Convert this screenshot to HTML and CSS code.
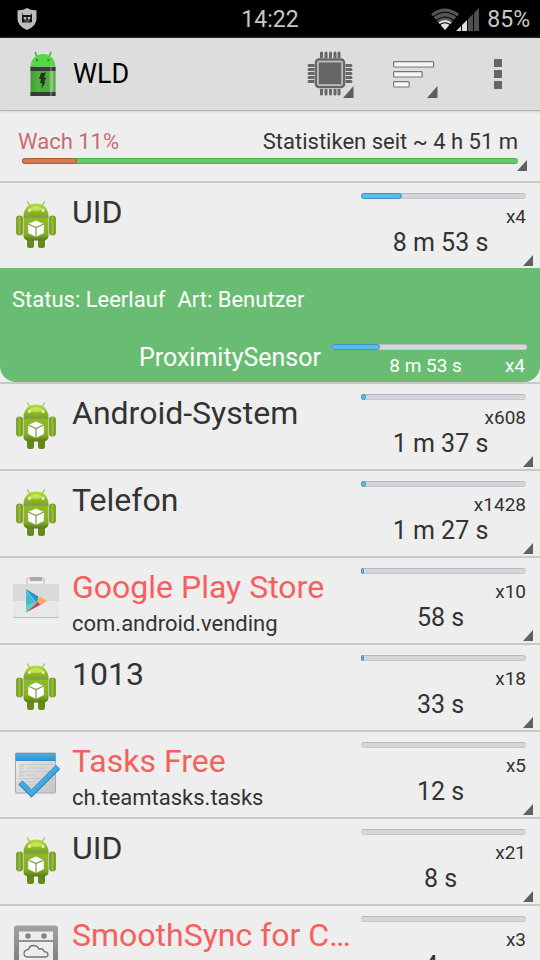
FILE: index.html
```html
<!DOCTYPE html>
<html lang="de">
<head>
<meta charset="utf-8">
<meta name="viewport" content="width=device-width, initial-scale=1">
<title>WLD</title>
<link rel="stylesheet" href="styles.css">
</head>
<body>
<svg class="defs" aria-hidden="true">
  <defs>
    <linearGradient id="green" x1="0" y1="0" x2="0" y2="1"><stop offset="0" stop-color="#b4dc3c"/><stop offset="1" stop-color="#7aa51e"/></linearGradient>
    <linearGradient id="limb" x1="0" y1="0" x2="1" y2="0"><stop offset="0" stop-color="#6d9622"/><stop offset=".5" stop-color="#96c02c"/><stop offset="1" stop-color="#68901f"/></linearGradient>
    <linearGradient id="torso" x1="0" y1="0" x2="0" y2="1"><stop offset="0" stop-color="#8fba27"/><stop offset=".7" stop-color="#87b024"/><stop offset="1" stop-color="#587b16"/></linearGradient>
    <linearGradient id="battery" x1="0" y1="0" x2="1" y2="0"><stop offset="0" stop-color="#3f9c33"/><stop offset=".3" stop-color="#4fb53f"/><stop offset=".74" stop-color="#46ab39"/><stop offset=".83" stop-color="#8be07a"/><stop offset="1" stop-color="#3f9c33"/></linearGradient>
    <linearGradient id="paper" x1="0" y1="0" x2="1" y2="1"><stop offset="0" stop-color="#ececec"/><stop offset="1" stop-color="#c6c6c6"/></linearGradient>
    <linearGradient id="blue" x1="0" y1="0" x2="0" y2="1"><stop offset="0" stop-color="#4bb4e8"/><stop offset="1" stop-color="#2d8fcb"/></linearGradient>
    <linearGradient id="steel" x1="0" y1="0" x2="0" y2="1"><stop offset="0" stop-color="#a2a2a2"/><stop offset="1" stop-color="#747474"/></linearGradient>
    <symbol id="robot" viewBox="0 0 48 48">
      <path d="M15.500 1 18 5M32.500 1 30 5" stroke="#9aba50" stroke-width="1.200" stroke-linecap="round"/>
      <rect x="4.500" y="15" width="6" height="19" rx="2" fill="url(#limb)" stroke="#648b1c" stroke-width=".6"/>
      <rect x="37.500" y="15" width="6" height="19" rx="2" fill="url(#limb)" stroke="#648b1c" stroke-width=".6"/>
      <path d="M15 37h7v7.500q0 2.500-2.500 2.500h-2Q15 47 15 44.500zM26 37h7v7.500q0 2.500-2.500 2.500h-2Q26 47 26 44.500z" fill="#638a1b"/>
      <path d="M11.500 16.500h25v18q0 4.500-5 5h-15q-5-.5-5-5z" fill="url(#torso)"/>
      <path d="M11.500 15.500C11.500 7 17 2.500 24 2.500s12.500 4.500 12.500 13z" fill="url(#green)"/>
      <path d="M16 8q8-6 16 0-8 4-16 0z" fill="#d3f26c" opacity=".65"/>
      <path d="M11.500 16h25" stroke="#4d6e12" stroke-width="1"/>
      <circle cx="17.500" cy="9.500" r="1.300" fill="#fff"/><circle cx="31" cy="9.500" r="1.300" fill="#fff"/>
      <path d="m24 19.500 7.800 3.500v9L24 36l-7.800-4v-9z" fill="#fff"/>
      <path d="m16.200 23 7.800 3.500 7.800-3.500M24 26.500v9.500" fill="none" stroke="#7b9c48" stroke-width="1.200"/>
    </symbol>
  </defs>
</svg>
<div class="app">
  <div class="status">
    <svg class="shield" viewBox="0 0 20 22" aria-hidden="true"><path d="M10 0q4 2.500 9.500 2.200V11q0 7-9.500 11Q.5 18 .5 11V2.200Q6 2.500 10 0z" fill="#bdbdbd"/><path d="M5.500 4.500 6.300 7h7.400l.8-2.500.5 4v5q0 1-1 1H6q-1 0-1-1v-5z" fill="#111"/><path d="M6.500 9h2.800v2.500H7zM10.700 9h2.800L13 11.500h-2.300z" fill="#bdbdbd"/><path d="M7.500 13h5" stroke="#aaa" stroke-width=".8"/></svg>
    <span class="clock">14:22</span>
    <span class="signals">
      <svg class="wifi" viewBox="0 0 28 22" aria-hidden="true"><path d="M0 6Q14-5 28 6L14 22z" fill="#555"/><path d="M7.500 14.500Q14 9.500 20.500 14.500L14 22z" fill="#e2e2e2"/><path d="M2 9Q14-.5 26 9M5 12.500q9-7 18 0M9 16.500q5-3.500 10 0" fill="none" stroke="#000" stroke-width="1.200"/></svg>
      <svg class="cell" viewBox="0 0 23 23" aria-hidden="true"><path d="M0 23 5 18v5zM6 17l5-5v11H6z" fill="#dedede"/><path d="m12 11 5-5v17h-5zM18 5l5-5v23h-5z" fill="#505050"/></svg>
      <span>85%</span>
    </span>
  </div>

  <header class="bar">
    <svg class="logo" viewBox="0 0 28 46" aria-hidden="true"><path d="m6 1 2 5M22 1l-2 5" stroke="#45a43a" stroke-width="1.600"/><path d="M1.500 15.500C2 7 8 3 14 3s12 4 12.500 12.500z" fill="#55d748"/><circle cx="8" cy="9" r="1.200" fill="#328f2b"/><circle cx="19.500" cy="9" r="1.200" fill="#328f2b"/><rect x="1.500" y="15.500" width="25" height="29" fill="url(#battery)"/><path d="M1.500 16h25v4h-25zM1.500 41h25v4h-25z" fill="#3a3a3a"/><path d="M22 16v29" stroke="#aaa" stroke-width="2" opacity=".4"/><path d="m12 22 5-.5-2 5h2.500L15 31h1.500l-4 7 .5-6h-2l1-4h-2z" fill="#2b2f27"/></svg>
    <h1 class="app-name">WLD</h1>
    <button class="tool" type="button" aria-label="CPU">
      <svg class="tool-icon" viewBox="0 0 48 48" aria-hidden="true"><g stroke="#666" stroke-width="3" stroke-linecap="round"><path d="M15.500 3v41M20 3v41M24.500 3v41M29 3v41M33 3v41M3 15.500h42M3 19.500h42M3 23.500h42M3 27.500h42M3 31.500h42"/></g><rect x="8.500" y="8" width="31" height="31" fill="#ddd"/><rect x="10" y="9.500" width="28" height="27.500" rx="3" fill="#ddd" stroke="#666" stroke-width="2.500"/><rect x="12.500" y="12" width="23" height="22.500" fill="#666" stroke="#aaa" stroke-width="1"/><path d="M47.500 35v13h-12z" fill="#ddd"/><path d="M47.500 36v12H37z" fill="#5c5c5c"/></svg>
    </button>
    <button class="tool" type="button" aria-label="Sortieren">
      <svg class="tool-icon" viewBox="0 0 48 48" aria-hidden="true"><g fill="#f7f7f7" stroke="#777" stroke-width="1.200"><rect x="3.600" y="11.600" width="40" height="5.400" rx=".8"/><rect x="3.600" y="21.600" width="28.500" height="5.400" rx=".8"/><rect x="3.600" y="31.600" width="15.500" height="5.400" rx=".8"/></g><path d="M47.500 36v12H37z" fill="#5c5c5c"/></svg>
    </button>
    <button class="tool" type="button" aria-label="Menü">
      <svg class="tool-icon" viewBox="0 0 48 48" aria-hidden="true"><path d="M20 9h8v8h-8zM20 20h8v8h-8zM20 31h8v8h-8z" fill="#666"/></svg>
    </button>
  </header>

  <section class="summary corner">
    <div class="summary-text"><span class="awake">Wach 11%</span><span>Statistiken seit ~ 4 h 51 m</span></div>
    <div class="meter total"><div class="fill" style="width:11%"></div></div>
  </section>

  <main>
    <ul class="list">
      <li class="item">
        <div class="row corner">
          <svg class="icon" aria-hidden="true"><use href="#robot"/></svg>
          <div class="info"><h2 class="name">UID</h2></div>
          <div class="stats"><div class="meter"><div class="fill" style="width:25%"></div></div><p class="count">x4</p><p class="time">8 m 53 s</p></div>
        </div>
        <div class="detail">
          <p class="state"><span>Status: Leerlauf</span><span>Art: Benutzer</span></p>
          <div class="lock">
            <p class="lock-name">ProximitySensor</p>
            <div class="lock-stats"><div class="meter"><div class="fill" style="width:25%"></div></div><p class="lock-figures"><span class="lock-time">8 m 53 s</span><span>x4</span></p></div>
          </div>
        </div>
      </li>
      <li class="item">
        <div class="row corner">
          <svg class="icon" aria-hidden="true"><use href="#robot"/></svg>
          <div class="info"><h2 class="name">Android-System</h2></div>
          <div class="stats"><div class="meter"><div class="fill" style="width:3%"></div></div><p class="count">x608</p><p class="time">1 m 37 s</p></div>
        </div>
      </li>
      <li class="item">
        <div class="row corner">
          <svg class="icon" aria-hidden="true"><use href="#robot"/></svg>
          <div class="info"><h2 class="name">Telefon</h2></div>
          <div class="stats"><div class="meter"><div class="fill" style="width:3%"></div></div><p class="count">x1428</p><p class="time">1 m 27 s</p></div>
        </div>
      </li>
      <li class="item">
        <div class="row corner">
          <svg class="icon" viewBox="0 0 48 48" aria-hidden="true"><path d="M15 12V4q0-2 2-2h13q2 0 2 2v6" fill="none" stroke="#d2d2d2" stroke-width="2"/><path d="M18 1h12v4H18z" fill="#aaa"/><rect x="1" y="8" width="46" height="34" rx="2" fill="#bdbdbd"/><rect x="1" y="8" width="46" height="33" rx="2" fill="#e8e8e8"/><path d="M1 25V10q0-2 2-2h42q2 0 2 2v15z" fill="#dadada"/><path d="M14 13v23.500L26 25z" fill="#4fd9c8"/><path d="m14 13 12.500 7.500L25 27z" fill="#2d8fc4"/><path d="m14 15 9 11-9 3z" fill="#45b8d8"/><path d="M14 36.500 26 25.500l4 2.500z" fill="#d43f60"/><path d="m25 25 3-4.500 7.500 4.500-7 4z" fill="#fba963"/></svg>
          <div class="info"><h2 class="name alert">Google Play Store</h2><p class="package">com.android.vending</p></div>
          <div class="stats"><div class="meter"><div class="fill" style="width:2%"></div></div><p class="count">x10</p><p class="time">58 s</p></div>
        </div>
      </li>
      <li class="item">
        <div class="row corner">
          <svg class="icon" aria-hidden="true"><use href="#robot"/></svg>
          <div class="info"><h2 class="name">1013</h2></div>
          <div class="stats"><div class="meter"><div class="fill" style="width:1%"></div></div><p class="count">x18</p><p class="time">33 s</p></div>
        </div>
      </li>
      <li class="item">
        <div class="row corner">
          <svg class="icon" viewBox="0 0 48 48" aria-hidden="true"><rect x="3.500" y="3" width="40" height="40" rx="1" fill="url(#paper)" stroke="#aaa"/><path d="M3.500 3h40v8h-40z" fill="url(#blue)"/><path d="M3.500 3.500h40" stroke="#8a8a8a"/><g fill="none" stroke="#c2c2c2" stroke-width=".8"><path d="M7 14.500h34M7 21.500h34M7 28.500h34M7 35h34M14 18h18M14 25h9M14 32h9"/><rect x="8" y="16" width="3" height="3"/><rect x="8" y="23" width="3" height="3"/></g><path d="m8.500 32.500 11 11L46 17" fill="none" stroke="#2b85bd" stroke-width="6"/><path d="m8.500 32 11 11L46 16.500" fill="none" stroke="#43a9df" stroke-width="4.500"/></svg>
          <div class="info"><h2 class="name alert">Tasks Free</h2><p class="package">ch.teamtasks.tasks</p></div>
          <div class="stats"><div class="meter"></div><p class="count">x5</p><p class="time">12 s</p></div>
        </div>
      </li>
      <li class="item">
        <div class="row corner">
          <svg class="icon" aria-hidden="true"><use href="#robot"/></svg>
          <div class="info"><h2 class="name">UID</h2></div>
          <div class="stats"><div class="meter"></div><p class="count">x21</p><p class="time">8 s</p></div>
        </div>
      </li>
      <li class="item">
        <div class="row corner">
          <svg class="icon" viewBox="0 0 48 48" aria-hidden="true"><rect x="2" y="1.500" width="44" height="46" rx="3" fill="url(#steel)"/><path d="M7 7.500h34v8.500H7zM7 18h34v26H7z" fill="#ededed"/><circle cx="16" cy="12" r="2.800" fill="#868686"/><circle cx="32" cy="12" r="2.800" fill="#868686"/><path d="M16 33q-4 0-4-3.500t4.500-4q1-4 5-4t5.500 3.500q4-1 5 2.500 4 .5 4 3T33 33z" fill="none" stroke="#747474" stroke-width="1.300"/></svg>
          <div class="info"><h2 class="name alert">SmoothSync for Cloud Calendar</h2></div>
          <div class="stats"><div class="meter"></div><p class="count">x3</p><p class="time">4 s</p></div>
        </div>
      </li>
    </ul>
  </main>
</div>
</body>
</html>
```
FILE: styles.css
```css
* { box-sizing: border-box; }

body {
  margin: 0;
  background: #eee;
  color: #333;
  font-family: Roboto, "Liberation Sans", sans-serif;
}

h1, h2, p, ul { margin: 0; padding: 0; font-weight: 400; }
svg { display: block; flex: none; }
.defs { position: absolute; width: 0; height: 0; }

.app {
  display: flex;
  flex-direction: column;
  height: 100vh;
}

.status {
  display: grid;
  grid-template-columns: 1fr auto 1fr;
  align-items: center;
  flex: none;
  height: 38px;
  padding: 0 10px;
  background: #000;
  color: #c8c8c8;
  font-size: 23px;
}
.shield { width: 20px; height: 22px; margin-left: 7px; }
.signals { display: flex; align-items: center; justify-content: flex-end; }
.wifi { width: 28px; height: 22px; margin-right: -3px; }
.cell { width: 23px; height: 23px; margin-right: 8px; }

.bar {
  display: flex;
  align-items: center;
  flex: none;
  height: 73px;
  padding-left: 29px;
  background: #ddd;
  border-bottom: 1px solid #b2b2b2;
  box-shadow: 0 1px 3px #d4d4d4;
  color: #000;
}
.logo { width: 28px; height: 46px; }
.app-name { flex: 1; margin-left: 16px; font-size: 27px; }
.tool {
  display: flex;
  justify-content: center;
  width: 84px;
  padding: 0;
  border: 0;
  background: none;
}
.tool-icon { width: 48px; height: 48px; overflow: visible; }

.corner { position: relative; }
.corner::after {
  content: "";
  position: absolute;
  right: 7px;
  bottom: 2px;
  width: 10px;
  height: 11px;
  background: #606060;
  clip-path: polygon(100% 0, 100% 100%, 0 100%);
}

.summary {
  flex: none;
  padding: 16px 22px 17px;
  border-bottom: 2px solid #c8c8c8;
  font-size: 22px;
  line-height: 30px;
}
.summary.corner::after { right: 13px; bottom: 10px; }
.summary-text { display: flex; justify-content: space-between; margin: 0 0 1px -4px; }
.awake { color: #c86b74; }

.meter {
  height: 6px;
  border-radius: 3px;
  background: #d3d7db;
  border-top: 1px solid #b5babf;
  border-bottom: 1px solid #c3c7cb;
}
.fill {
  min-width: 3px;
  height: 6px;
  margin-top: -1px;
  border: 1px solid #3e93c4;
  border-radius: 3px;
  background: #5dbbe9;
}
.total { background: #66c766; border-color: #48b54b; }
.total .fill { background: #d9784c; border-color: #ab6038; }

main { flex: 1; min-height: 0; overflow-y: auto; scrollbar-width: none; }
.list { list-style: none; }
.item { border-bottom: 2px solid #c8c8c8; }

.row {
  display: flex;
  height: 85px;
  padding: 10px 14px 0 12px;
}
.icon { width: 48px; height: 48px; margin-top: 8px; }
.info { flex: 1; min-width: 0; padding: 0 8px 0 12px; }
.name {
  overflow: hidden;
  font-size: 32px;
  line-height: 38px;
  text-overflow: ellipsis;
  white-space: nowrap;
}
.alert { color: #f4605e; }
.package { font-size: 22px; line-height: 36px; }
.stats { width: 165px; }
.count { margin-top: 5px; font-size: 19px; line-height: 26px; text-align: right; }
.time { padding-right: 6px; font-size: 25px; line-height: 26px; text-align: center; }

.detail {
  padding: 17px 13px 1px 12px;
  border-radius: 0 0 16px 16px;
  background: #69bd73;
  color: #fff;
}
.state { display: flex; gap: 12px; font-size: 22px; line-height: 30px; }
.lock { display: flex; justify-content: flex-end; margin-top: 29px; }
.lock-name { margin-right: 10px; font-size: 25px; line-height: 28px; }
.lock-stats { width: 196px; }
.lock .meter { background: #d5d5dc; }
.lock-figures {
  display: flex;
  gap: 43px;
  justify-content: flex-end;
  margin-top: 1px;
  padding-right: 2px;
  font-size: 19px;
  line-height: 30px;
}
```
